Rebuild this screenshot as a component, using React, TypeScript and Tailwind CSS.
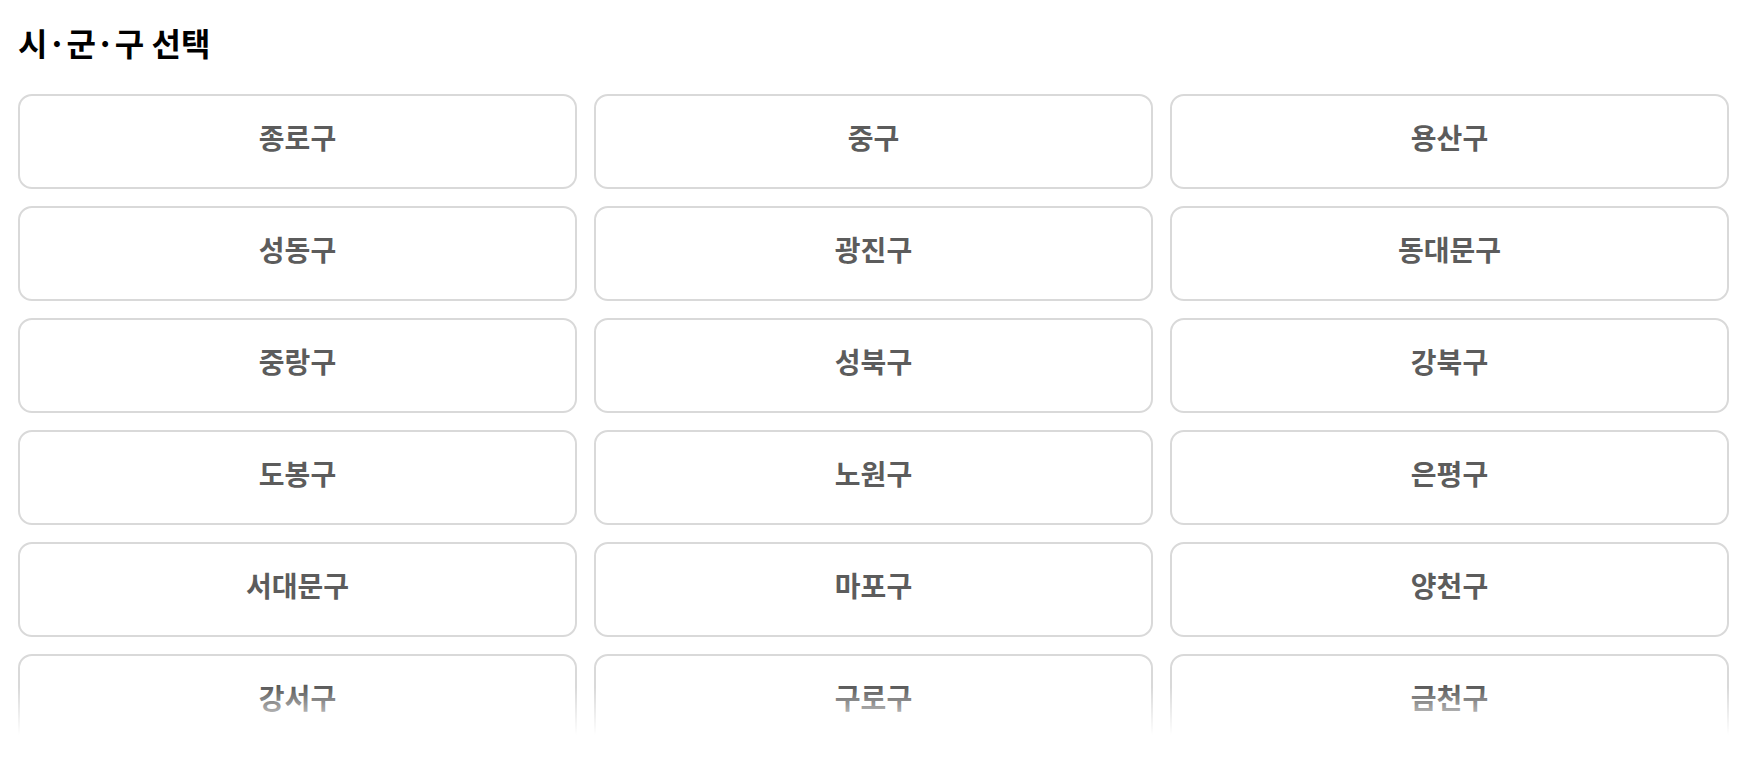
const DISTRICTS = [
  "종로구", "중구", "용산구",
  "성동구", "광진구", "동대문구",
  "중랑구", "성북구", "강북구",
  "도봉구", "노원구", "은평구",
  "서대문구", "마포구", "양천구",
  "강서구", "구로구", "금천구",
  "영등포구", "동작구", "관악구",
  "서초구", "강남구", "송파구",
  "강동구",
];

export default function App() {
  return (
    <div
      className="min-h-screen bg-white pl-[18px] pr-[21px] pt-[22px]"
      style={{ fontFamily: '"Noto Sans CJK KR", "Noto Sans", sans-serif' }}
    >
      <h1 className="text-[32px] font-bold leading-[40px] text-black">시·군·구 선택</h1>

      <div className="relative mt-[32px] h-[641px] overflow-hidden">
        <div className="grid grid-cols-3 gap-[17px]">
          {DISTRICTS.map((d) => (
            <button
              key={d}
              type="button"
              className="flex h-[95px] items-center justify-center rounded-[14px] border-2 border-[#d9d9d9] bg-white pb-[9px] text-[28px] font-bold text-[#5c5c5c]"
            >
              {d}
            </button>
          ))}
        </div>
        {/* bottom fade over the scroll area */}
        <div className="pointer-events-none absolute inset-x-0 bottom-0 h-[48px] bg-gradient-to-b from-white/0 to-white" />
      </div>
    </div>
  );
}
